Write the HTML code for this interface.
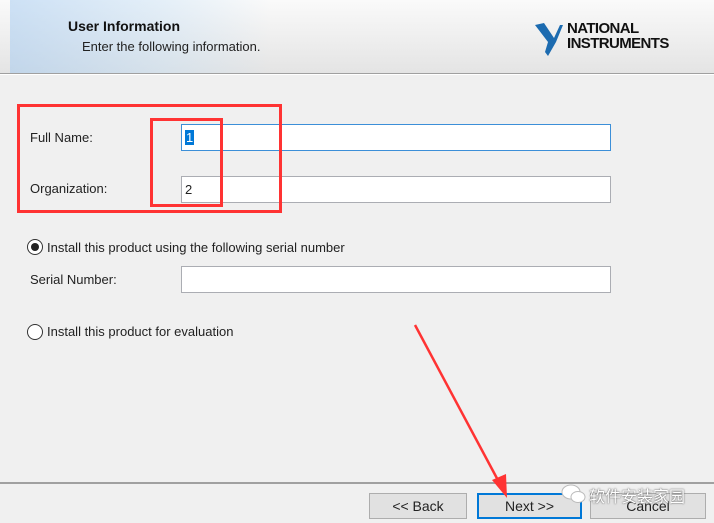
<!DOCTYPE html><html><head><style>
body{margin:0;width:714px;height:523px;background:#f0f0f0;font-family:"Liberation Sans",sans-serif;font-size:13px;color:#222;position:relative;overflow:hidden}
.a{position:absolute}
.in{position:absolute;background:#fff;border:1px solid #abadb3;box-sizing:border-box;height:27px}
.btn{position:absolute;top:493px;height:26px;background:#e1e1e1;border:1px solid #adadad;box-sizing:border-box;text-align:center;line-height:24px;font-size:14px}
.rad{position:absolute;width:16px;height:16px;border:1px solid #333;border-radius:50%;box-sizing:border-box;background:#fff}
</style></head><body>
<div class="a" style="left:0;top:0;width:714px;height:73px;background:linear-gradient(#fafafa,#e4e4e4)"></div>
<div class="a" style="left:10px;top:0;width:260px;height:73px;background:linear-gradient(90deg,rgba(160,200,240,.5),rgba(190,220,245,.35) 60%,rgba(255,255,255,0))"></div>
<div class="a" style="left:0;top:73px;width:714px;height:1px;background:#a0a0a0"></div>
<div class="a" style="left:0;top:74px;width:714px;height:1px;background:#fff"></div>
<div class="a" style="left:68px;top:18px;font-weight:bold;font-size:14px;color:#111">User Information</div>
<div class="a" style="left:82px;top:39px;font-size:13px">Enter the following information.</div>
<svg class="a" style="left:534px;top:22px" width="30" height="36"><path d="M1 3 L10 1 L20 16 L26 3 L29 3 L22 20 L14 34 L11 30 L14 20 Z" fill="#1c6bb0"/></svg>
<div class="a" style="left:567px;top:21px;font-weight:bold;font-size:15px;line-height:15px;letter-spacing:-0.6px;color:#111">NATIONAL<br>INSTRUMENTS</div>
<div class="a" style="left:30px;top:130px">Full Name:</div>
<div class="a" style="left:30px;top:181px">Organization:</div>
<div class="in" style="left:181px;top:124px;width:430px;border-color:#3c8fd8"><span class="a" style="left:3px;top:5px;background:#0078d7;color:#fff;padding:0 1px">1</span></div>
<div class="in" style="left:181px;top:176px;width:430px"><span class="a" style="left:3px;top:5px">2</span></div>
<div class="a" style="left:17px;top:104px;width:259px;height:103px;border:3px solid #f33"></div>
<div class="a" style="left:150px;top:118px;width:67px;height:83px;border:3px solid #f33"></div>
<div class="rad" style="left:27px;top:239px"><div class="a" style="left:3px;top:3px;width:8px;height:8px;border-radius:50%;background:#222"></div></div>
<div class="a" style="left:47px;top:240px">Install this product using the following serial number</div>
<div class="a" style="left:30px;top:272px">Serial Number:</div>
<div class="in" style="left:181px;top:266px;width:430px"></div>
<div class="rad" style="left:27px;top:324px"></div>
<div class="a" style="left:47px;top:324px">Install this product for evaluation</div>
<div class="a" style="left:0;top:482px;width:714px;height:2px;background:#a0a0a0"></div>
<div class="btn" style="left:369px;width:98px">&lt;&lt; Back</div>
<div class="btn" style="left:477px;width:105px;border:2px solid #0078d7;line-height:22px">Next &gt;&gt;</div>
<div class="btn" style="left:590px;width:116px">Cancel</div>
<div class="a" style="left:589px;top:483px;font-size:16px;color:#fff;text-shadow:0 0 1px #555,0 0 2px #888;font-family:'Liberation Sans','Noto Sans CJK SC',sans-serif">软件安装家园</div>
<svg class="a" style="left:560px;top:482px" width="28" height="24"><ellipse cx="11" cy="10" rx="9" ry="7" fill="#fff" stroke="#bbb"/><ellipse cx="18" cy="15" rx="7" ry="5.5" fill="#fff" stroke="#bbb"/></svg>
<svg class="a" style="left:0;top:0" width="714" height="523"><line x1="415" y1="325" x2="500" y2="484" stroke="#f33" stroke-width="2.5"/><path d="M507 498 L492 480 L506 474 Z" fill="#f33"/></svg>
</body></html>
